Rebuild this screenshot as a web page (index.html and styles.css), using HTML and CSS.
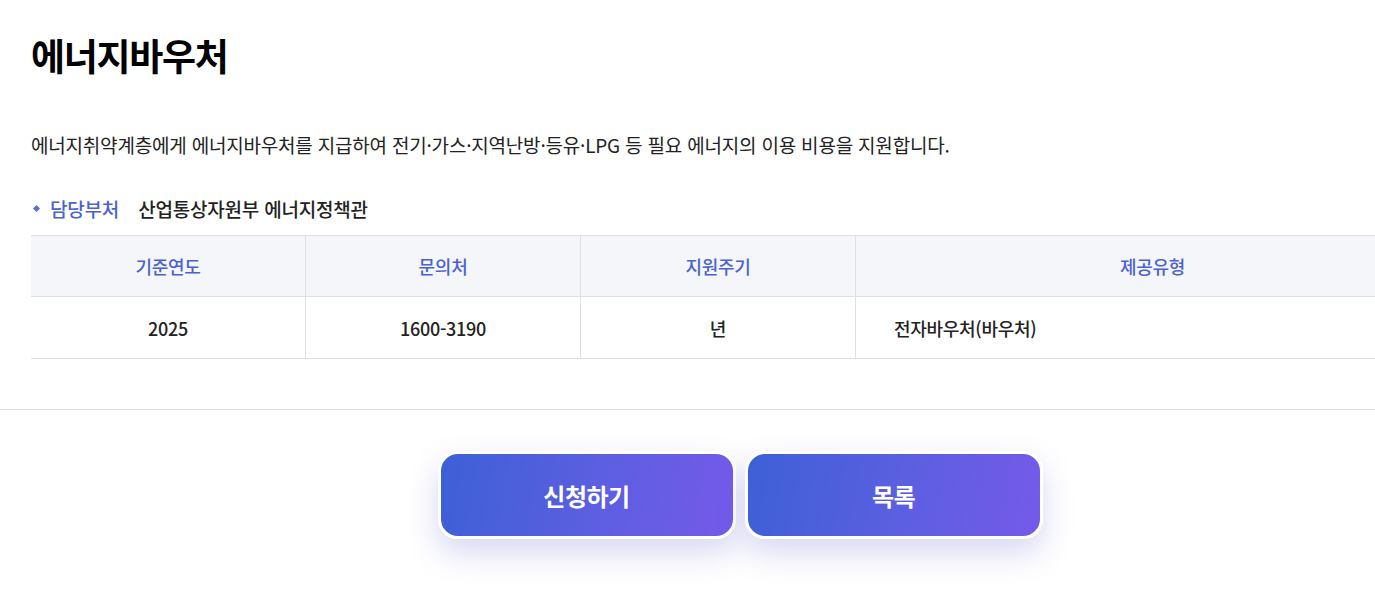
FILE: index.html
```html
<!DOCTYPE html>
<html lang="ko">
<head>
<meta charset="utf-8">
<title>에너지바우처</title>
<link rel="stylesheet" href="styles.css">
</head>
<body>
<div class="page">
  <main class="content">
    <h1 class="title">에너지바우처</h1>
    <p class="desc">에너지취약계층에게 에너지바우처를 지급하여 전기·가스·지역난방·등유·LPG 등 필요 에너지의 이용 비용을 지원합니다.</p>
    <div class="dept">
      <span class="dept-mark"></span>
      <span class="dept-label">담당부처</span>
      <span class="dept-value">산업통상자원부 에너지정책관</span>
    </div>
    <table class="info">
      <thead>
        <tr>
          <th class="c1">기준연도</th>
          <th class="c2">문의처</th>
          <th class="c3">지원주기</th>
          <th class="c4">제공유형</th>
        </tr>
      </thead>
      <tbody>
        <tr>
          <td>2025</td>
          <td>1600-3190</td>
          <td>년</td>
          <td class="left">전자바우처(바우처)</td>
        </tr>
      </tbody>
    </table>
  </main>
  <hr class="divider">
  <div class="actions">
    <a class="btn" href="#">신청하기</a>
    <a class="btn" href="#">목록</a>
  </div>
</div>
</body>
</html>
```
FILE: styles.css
```css
html, body {
  margin: 0;
  padding: 0;
  overflow: hidden;
  background: #fff;
}
body {
  font-family: "Noto Sans CJK KR", "Noto Sans", sans-serif;
  color: #1e1e1e;
}
.page {
  width: 1375px;
  overflow: hidden;
  padding-bottom: 60px;
}
.content {
  width: 1418px;
  margin-left: 31px;
}
.title {
  margin: 0;
  padding-top: 27px;
  font-size: 37px;
  line-height: 56px;
  font-weight: 700;
  letter-spacing: -1.3px;
  color: #000;
}
.desc {
  margin: 48px 0 0;
  font-size: 19px;
  line-height: 28px;
  letter-spacing: -0.2px;
  color: #222;
}
.dept {
  display: flex;
  align-items: center;
  margin-top: 35px;
  height: 28px;
  font-size: 19px;
  font-weight: 500;
  letter-spacing: -0.2px;
}
.dept-mark {
  width: 5px;
  height: 5px;
  background: #5b70e0;
  transform: rotate(45deg);
  margin: 0 11px 0 3px;
}
.dept-label {
  color: #4a62d6;
  margin-right: 19px;
}
.dept-value {
  color: #222;
}
.info {
  margin-top: 13px;
  width: 1418px;
  border-collapse: collapse;
  table-layout: fixed;
  border-top: 1px solid #dfe0e4;
}
.info th, .info td {
  font-size: 18px;
  font-weight: 500;
  text-align: center;
  letter-spacing: -0.3px;
}
.info th {
  height: 60px;
  padding: 0;
  background: #f5f6fa;
  color: #4a62d6;
  border-bottom: 1px solid #dfe0e4;
}
.info td {
  height: 61px;
  padding: 0;
  color: #222;
  border-bottom: 1px solid #dfe0e4;
}
.info th + th, .info td + td {
  border-left: 1px solid #dfe0e4;
}
.info .c1, .info .c2, .info .c3 { width: 274px; }
.info td.left {
  text-align: left;
  padding-left: 38px;
}
.divider {
  margin: 50px 0 0;
  border: 0;
  border-top: 1px solid #e3e3e6;
  height: 0;
}
.actions {
  width: 1418px;
  margin-left: 31px;
  display: flex;
  justify-content: center;
  gap: 9px;
  padding-top: 41px;
}
.btn {
  box-sizing: border-box;
  width: 298px;
  height: 88px;
  display: flex;
  align-items: center;
  justify-content: center;
  border: 3px solid #fff;
  border-radius: 20px;
  background: linear-gradient(100deg, #3d60d6 0%, #5a5fe0 50%, #755ae9 100%);
  box-shadow: 0 14px 30px rgba(100, 100, 210, 0.25);
  color: #fff;
  font-size: 24px;
  font-weight: 700;
  text-decoration: none;
  letter-spacing: -0.5px;
}
```
